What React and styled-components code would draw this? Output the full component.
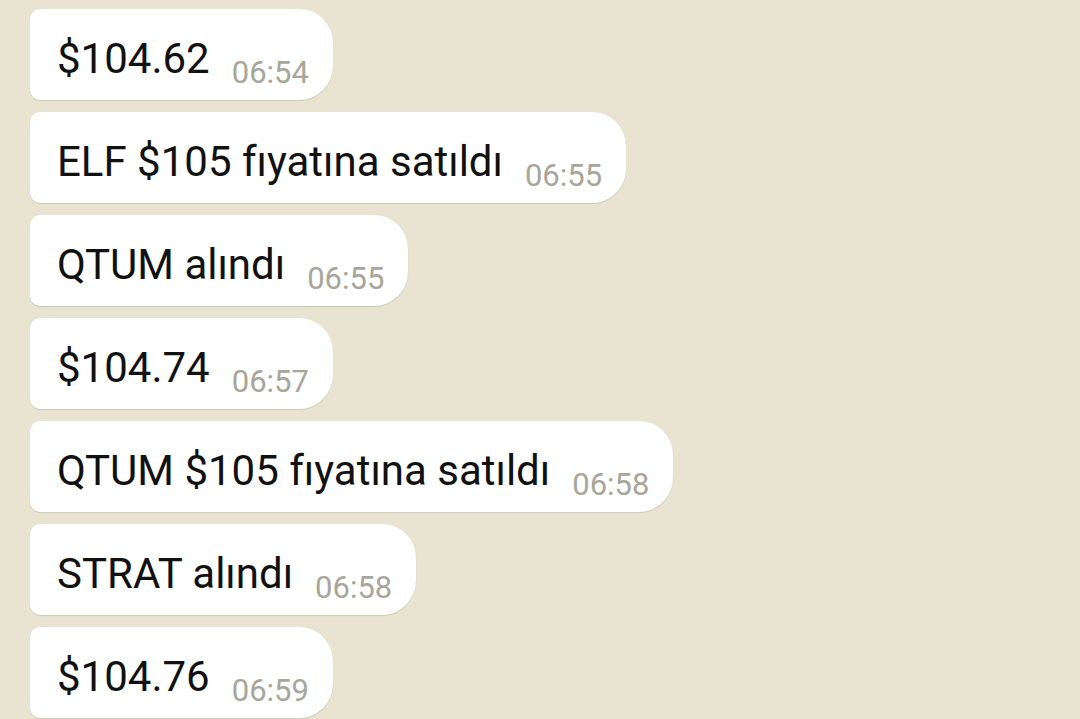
import styled, { createGlobalStyle } from "styled-components"

const messages = [
    { text: "$104.62", time: "06:54" },
    { text: "ELF $105 fıyatına satıldı", time: "06:55" },
    { text: "QTUM alındı", time: "06:55" },
    { text: "$104.74", time: "06:57" },
    { text: "QTUM $105 fıyatına satıldı", time: "06:58" },
    { text: "STRAT alındı", time: "06:58" },
    { text: "$104.76", time: "06:59" },
]

export default function App () {
    return (
        <>
            <GlobalStyle />
            <Chat>
                {messages.map((m, i) => (
                    <Bubble key={i}>
                        <Text>{m.text}</Text>
                        <Time>{m.time}</Time>
                    </Bubble>
                ))}
            </Chat>
        </>
    )
}

const GlobalStyle = createGlobalStyle`
    html, body {
        margin: 0;
        padding: 0;
        background: #e9e4d1;
        font-family: Roboto, "Noto Sans", sans-serif;
    }
`

const Chat = styled.div`
    height: 719px;
    overflow: hidden;
    display: flex;
    flex-direction: column;
    align-items: flex-start;
    gap: 12px;
    padding: 9px 0 0 30px;
    box-sizing: border-box;
`

const Bubble = styled.div`
    display: flex;
    align-items: baseline;
    height: 91px;
    box-sizing: border-box;
    padding: 0 24px 0 27px;
    background: #fff;
    border-radius: 10px 34px 34px 10px;
    box-shadow: 0 1px 1px rgba(0, 0, 0, 0.12);
`

const Text = styled.p`
    margin: 0;
    padding-top: 29px;
    font-size: 42px;
    line-height: 1;
    color: #111;
`

const Time = styled.span`
    margin-left: 22px;
    position: relative;
    top: 10px;
    font-size: 31px;
    color: #a8a69a;
`
